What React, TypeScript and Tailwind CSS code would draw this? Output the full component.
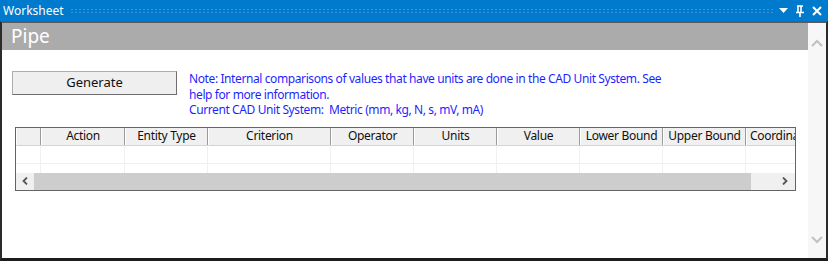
import React from "react";

const columns = [
    { label: "", w: 25 },
    { label: "Action", w: 84 },
    { label: "Entity Type", w: 83 },
    { label: "Criterion", w: 123 },
    { label: "Operator", w: 83 },
    { label: "Units", w: 83 },
    { label: "Value", w: 83 },
    { label: "Lower Bound", w: 83 },
    { label: "Upper Bound", w: 83 },
];

const font = { fontFamily: '"Noto Sans", "DejaVu Sans", sans-serif' };

const TitleIcons = () => (
    <div className="flex items-center gap-[7px] pr-[6px]">
        <svg width="9" height="6" viewBox="0 0 9 6">
            <path d="M0 0 H9 L4.5 5 Z" fill="#fff" />
        </svg>
        <svg width="10" height="12" viewBox="0 0 10 12">
            <path d="M2 1 H8 M3 1 V7 M6 1 V7 M1 7.5 H9 M5 8 V12" stroke="#fff" strokeWidth="1.6" fill="none" />
        </svg>
        <svg width="10" height="10" viewBox="0 0 10 10">
            <path d="M1 1 L9 9 M9 1 L1 9" stroke="#fff" strokeWidth="2" />
        </svg>
    </div>
);

const Cells = ({ border }: { border: string }) => (
    <>
        {columns.map((c, i) => (
            <div key={i} className={`shrink-0 h-full border-r ${border}`} style={{ width: c.w }} />
        ))}
        <div className={`w-[60px] shrink-0 h-full border-r ${border}`} />
    </>
);

export default function App() {
    return (
        <div className="w-[828px] h-[261px] flex flex-col bg-white overflow-hidden" style={font}>
            {/* title bar */}
            <div className="h-[21px] bg-[#007acc] flex items-center">
                <span className="pl-[3px] text-[12px] text-white leading-none">Worksheet</span>
                <div className="flex-1 h-[5px] mx-[6px] bg-[radial-gradient(circle,#3d95d8_0.7px,transparent_0.9px)] bg-[length:4px_3px]" />
                <TitleIcons />
            </div>

            <div className="flex-1 flex border-t-2 border-x-2 border-b-[3px] border-t-[#5a5a5a] border-x-[#2b2b2b] border-b-[#1c1c1c]">
                <div className="flex-1 flex flex-col">
                    <div className="h-[27px] bg-[#ababab] flex items-center pl-[9px]">
                        <span className="text-white text-[19px] leading-none">Pipe</span>
                    </div>

                    <div className="flex pl-[10px] pt-[21px]">
                        <button className="w-[165px] h-[24px] bg-[#efefef] border border-[#adadad] border-r-[#6e6e6e] border-b-[#6e6e6e] text-[13px] text-[#111]">
                            Generate
                        </button>
                        <div className="pl-[12px] text-[12px] leading-[15.5px] text-[#1f1fff] tracking-[-0.4px]">
                            <div>Note: Internal comparisons of values that have units are done in the CAD Unit System. See</div>
                            <div>help for more information.</div>
                            <div>Current CAD Unit System:&nbsp; Metric (mm, kg, N, s, mV, mA)</div>
                        </div>
                    </div>

                    <div className="ml-[13px] mt-[9px] w-[781px] h-[64px] border border-[#646464] flex flex-col overflow-hidden">
                        <div className="flex h-[18px] bg-[#f0f0f0] border-b border-[#d5d5d5] shrink-0">
                            {columns.map((c, i) => (
                                <div
                                    key={i}
                                    className="shrink-0 h-full border-r border-[#9a9a9a] border-l border-l-white flex items-center justify-center text-[12px] text-[#111] whitespace-nowrap overflow-hidden tracking-[-0.3px]"
                                    style={{ width: c.w }}
                                >
                                    {c.label}
                                </div>
                            ))}
                            <div className="w-[90px] shrink-0 h-full border-l border-l-white flex items-center pl-[3px] text-[12px] text-[#111] whitespace-nowrap tracking-[-0.3px]">
                                Coordinate System
                            </div>
                        </div>
                        <div className="h-[27px] shrink-0 overflow-hidden flex flex-col">
                            {[0, 1].map((r) => (
                                <div key={r} className="flex h-[18px] shrink-0 border-b border-[#f0f0f0]">
                                    <Cells border="border-[#f0f0f0]" />
                                </div>
                            ))}
                        </div>
                        <div className="flex h-[17px] bg-[#f0f0f0] shrink-0">
                            <div className="w-[18px] flex items-center justify-center">
                                <svg width="6" height="8" viewBox="0 0 6 8">
                                    <path d="M5 0.5 L1.5 4 L5 7.5" stroke="#555" strokeWidth="1.8" fill="none" />
                                </svg>
                            </div>
                            <div className="w-[717px] bg-[#cdcdcd]" />
                            <div className="flex-1 flex items-center justify-end pr-[7px]">
                                <svg width="6" height="8" viewBox="0 0 6 8">
                                    <path d="M1 0.5 L4.5 4 L1 7.5" stroke="#555" strokeWidth="1.8" fill="none" />
                                </svg>
                            </div>
                        </div>
                    </div>
                </div>

                <div className="w-[18px] bg-[#f7f7f7] flex flex-col items-center justify-between pt-[16px] pb-[14px]">
                    <svg width="12" height="8" viewBox="0 0 12 8">
                        <path d="M1 7 L6 2 L11 7" stroke="#c2c2c2" strokeWidth="2.2" fill="none" />
                    </svg>
                    <svg width="12" height="8" viewBox="0 0 12 8">
                        <path d="M1 1 L6 6 L11 1" stroke="#c2c2c2" strokeWidth="2.2" fill="none" />
                    </svg>
                </div>
            </div>
        </div>
    );
}
